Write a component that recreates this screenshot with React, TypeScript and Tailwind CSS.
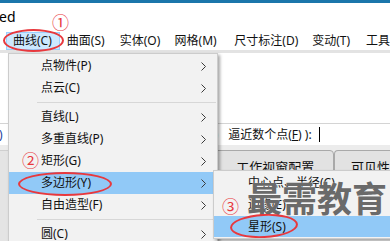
import React from "react";

const Chevron = () => (
  <svg width="5" height="9" viewBox="0 0 5 9" className="shrink-0">
    <path d="M0.5 0.5 L4.5 4.5 L0.5 8.5" fill="none" stroke="#3a3a3a" strokeWidth="1" />
  </svg>
);

const MenuRow = ({ label, hl }: { label: string; hl?: boolean }) => (
  <div className={hl ? "flex h-[22px] items-center bg-[#91c9f7] pl-[32px] pr-[11px]" : "flex h-[22px] items-center pl-[32px] pr-[11px]"}>
    <span className="flex-1">{label}</span>
    <Chevron />
  </div>
);

const Sep = () => (
  <div className="flex h-[7px] items-center pl-[28px] pr-[1px]">
    <div className="h-px w-full bg-[#d7d7d7]" />
  </div>
);

export default function App() {
  return (
    <div className="relative h-[241px] w-[390px] overflow-hidden bg-white text-[12px] text-[#111] font-['Noto_Sans','Noto_Sans_CJK_SC',sans-serif]">
      {/* window chrome */}
      <div className="h-[3px] bg-[#1b76ab]" />
      <div className="h-[29px] pt-[5px] text-[14px] leading-[18px] text-black">
        <span className="-ml-[1px]">ed</span>
      </div>
      {/* menu bar */}
      <div className="flex h-[18px] items-stretch whitespace-nowrap pl-[6px]">
        <div className="flex w-[54px] items-center border border-[#99d1ff] bg-[#cce8ff] pl-[6px]">曲线(C)</div>
        <div className="flex w-[53px] items-center pl-[7px]">曲面(S)</div>
        <div className="flex w-[55px] items-center pl-[7px]">实体(O)</div>
        <div className="flex w-[60px] items-center pl-[7px]">网格(M)</div>
        <div className="flex w-[78px] items-center pl-[7px]">尺寸标注(D)</div>
        <div className="flex w-[54px] items-center pl-[7px]">变动(T)</div>
        <div className="flex items-center pl-[7px]">工具</div>
      </div>
      <div className="h-[3px] bg-[#e3e3e3]" />
      {/* work area */}
      <div className="h-[70px] bg-white" />
      {/* command line */}
      <div className="relative flex h-[22px] items-center border-t border-[#d4d4d4] bg-white whitespace-nowrap">
        <span className="-ml-[1px] text-[#1a3fa0]">)</span>
        <span className="ml-[212px] text-[#1a3fa0]">)</span>
        <span className="ml-[10px]">
          逼近数个点(<span className="underline">F</span>) ):
        </span>
        <span className="ml-[7px] h-[15px] w-px bg-black" />
      </div>
      {/* tabs area */}
      <div className="flex h-[96px] bg-[#ececec] pt-[5px] whitespace-nowrap">
        <div className="w-[217px] border-t border-[#cfcfcf] bg-[#e4e4e4]" />
        <div className="flex h-[30px] w-[130px] items-start justify-center rounded-t-[4px] border border-[#a9a9a9] bg-[#e2e2e2] pl-[8px] pt-[8px] text-[13px] leading-[16px]">
          工作视窗配置
        </div>
        <div className="flex h-[30px] flex-1 items-start rounded-tl-[4px] border border-r-0 border-[#a9a9a9] bg-[#e2e2e2] pl-[16px] pt-[8px] text-[13px] leading-[16px]">
          可见性
        </div>
      </div>

      {/* main dropdown */}
      <div className="absolute left-[8px] top-[53px] w-[210px] border border-[#cccccc] bg-[#f2f2f2] pt-[1px] shadow-[2px_2px_3px_rgba(0,0,0,0.35)] whitespace-nowrap">
        <MenuRow label="点物件(P)" />
        <MenuRow label="点云(C)" />
        <Sep />
        <MenuRow label="直线(L)" />
        <MenuRow label="多重直线(P)" />
        <MenuRow label="矩形(G)" />
        <MenuRow label="多边形(Y)" hl />
        <MenuRow label="自由造型(F)" />
        <Sep />
        <MenuRow label="圆(C)" />
      </div>

      {/* submenu */}
      <div className="absolute left-[213px] top-[170px] w-[182px] border border-[#cccccc] bg-[#f2f2f2] pt-[1px] pb-[1px] shadow-[2px_2px_3px_rgba(0,0,0,0.3)] whitespace-nowrap">
        <div className="flex h-[22px] items-center pl-[34px]">中心点、半径(C)</div>
        <div className="flex h-[22px] items-center pl-[34px]">边缘(E)</div>
        <div className="flex h-[21px] items-center bg-[#91c9f7] pl-[34px]">星形(S)</div>
      </div>

      {/* watermark */}
      <div className="absolute left-[247px] top-[176px] text-[35px] font-bold leading-[42px] tracking-[0px] text-[#6a6a6a] [text-shadow:0_0_1px_#ffffff] font-['Noto_Sans_CJK_SC',sans-serif]">
        最需教育
      </div>

      {/* annotations */}
      <div className="absolute left-[52px] top-[12px] text-[17px] leading-[20px] text-[#e8383d] font-['Noto_Sans_CJK_SC',sans-serif]">①</div>
      <div className="absolute left-[22px] top-[150px] text-[17px] leading-[20px] text-[#e8383d] font-['Noto_Sans_CJK_SC',sans-serif]">②</div>
      <div className="absolute left-[222px] top-[196px] text-[17px] leading-[20px] text-[#e8383d] font-['Noto_Sans_CJK_SC',sans-serif]">③</div>

      <div className="absolute left-[3px] top-[29px] h-[23px] w-[61px] rounded-[50%] border-[2.5px] border-[#e8383d]" />
      <div className="absolute left-[18px] top-[172px] h-[24px] w-[94px] rounded-[50%] border-[2.5px] border-[#e8383d]" />
      <div className="absolute left-[230px] top-[214px] h-[24px] w-[68px] rotate-[-3deg] rounded-[50%] border-[2.5px] border-[#e8383d]" />
    </div>
  );
}
